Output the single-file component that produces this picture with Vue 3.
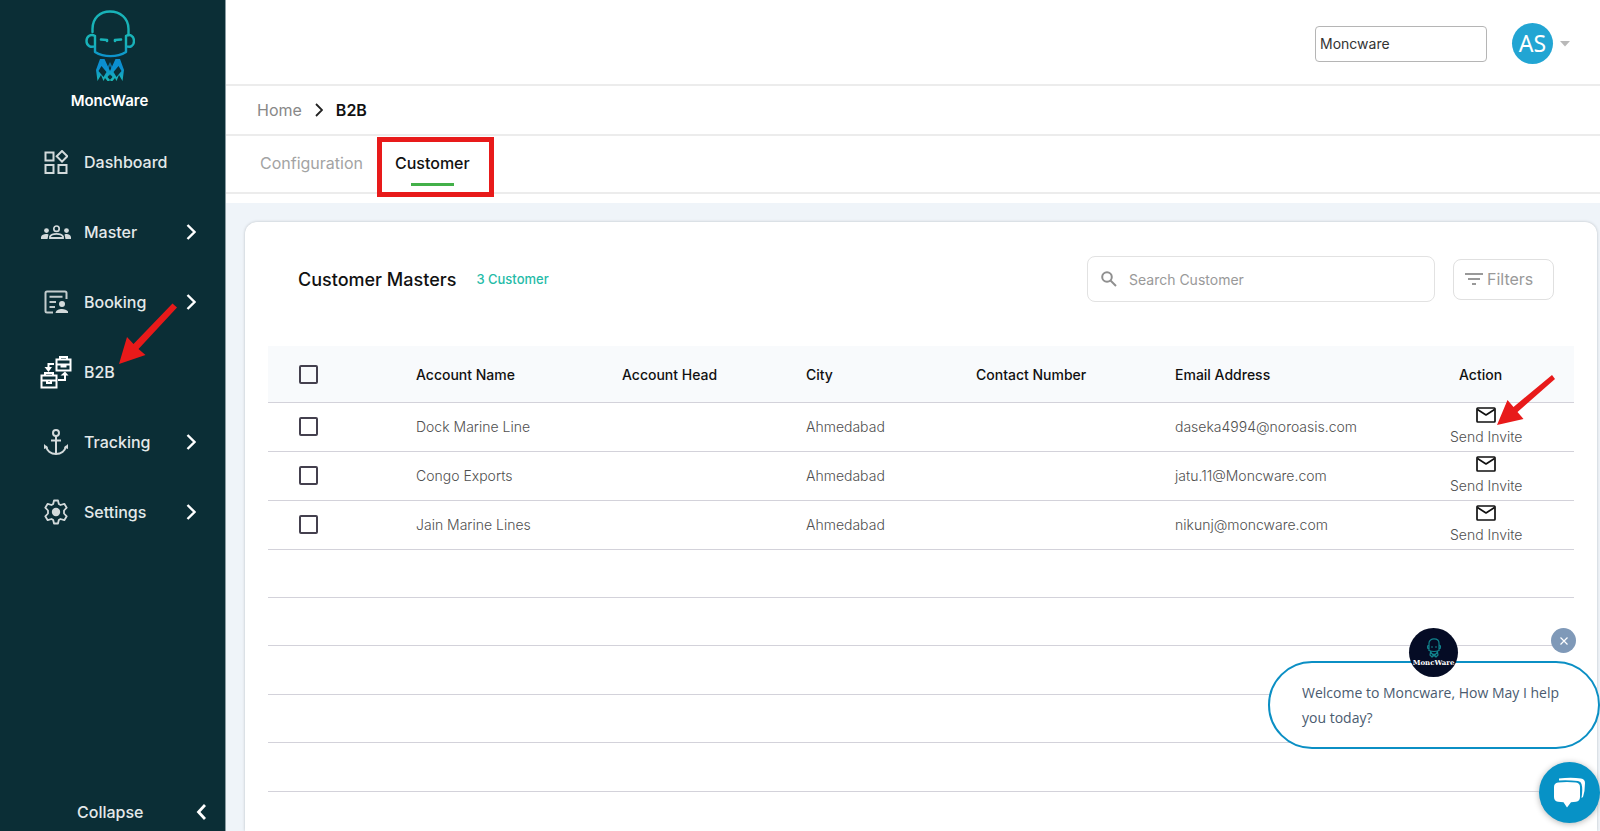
<script setup>
import { ref } from 'vue'

const menu = [
  { label: 'Dashboard', icon: 'dashboard', more: false },
  { label: 'Master', icon: 'people', more: true },
  { label: 'Booking', icon: 'booking', more: true },
  { label: 'B2B', icon: 'b2b', more: false },
  { label: 'Tracking', icon: 'anchor', more: true },
  { label: 'Settings', icon: 'gear', more: true },
]

const customers = [
  { name: 'Dock Marine Line', head: '', city: 'Ahmedabad', phone: '', email: 'daseka4994@noroasis.com' },
  { name: 'Congo Exports', head: '', city: 'Ahmedabad', phone: '', email: 'jatu.11@Moncware.com' },
  { name: 'Jain Marine Lines', head: '', city: 'Ahmedabad', phone: '', email: 'nikunj@moncware.com' },
]

const company = ref('Moncware')
const search = ref('')
</script>

<template>
  <div class="app">
    <aside class="sidebar">
      <div class="brand">
        <svg width="50" height="72" viewBox="0 0 50 72" fill="none" aria-hidden="true">
          <defs>
            <linearGradient id="face" x1="0" y1="0" x2="0" y2="48" gradientUnits="userSpaceOnUse">
              <stop offset="0.7" stop-color="#18b3b8" />
              <stop offset="1" stop-color="#0b8fd0" />
            </linearGradient>
            <linearGradient id="collar" x1="0" y1="49" x2="0" y2="71" gradientUnits="userSpaceOnUse">
              <stop offset="0.4" stop-color="#0b8fd0" />
              <stop offset="1" stop-color="#1bb9b4" />
            </linearGradient>
          </defs>
          <g stroke="url(#face)" stroke-width="2.4" stroke-linecap="round" stroke-linejoin="round">
            <path d="M7.500 22V19C7.500 8 15 1.500 25 1.500S43.500 8 43.500 19V25" />
            <path d="M10 26C6 23.500 1.500 26 1.500 31S6 38 10 36M10 26V42C19 47.500 32 47.500 41 42V26M41 26C45 23.500 49 26 49 31S45 38 41 36" />
            <path d="M16 29.500L22 30V31M36 29.500L30 30V31" stroke-width="2.600" />
          </g>
          <path fill="url(#collar)" fill-rule="evenodd" d="M15 49H19.500L25 61L30.500 49H35L39 60L37.500 71L34 65L31.500 71L30 68L27.500 71H25.500L25 69L24.500 71H22.500L20 68L18.500 71L16 65L12.500 71L11 60ZM16.500 56L13.500 61L18.500 67L21.500 62ZM33.500 56L28.500 62L31.500 67L36.500 61ZM25 64L22.500 67L25 70L27.500 67Z" />
          <path fill="url(#collar)" d="M25 52L28.500 59L25 66L21.500 59ZM25 55.500L23.500 59L25 62.500L26.500 59Z" fill-rule="evenodd" opacity="0.7" />
        </svg>
        <span class="brand-name">MoncWare</span>
      </div>

      <nav class="menu" aria-label="Main">
        <a v-for="item in menu" :key="item.label" class="menu-item" href="#">
          <span class="menu-icon">
            <svg v-if="item.icon === 'dashboard'" width="24" height="24" viewBox="0 0 24 24" fill="none" stroke="#d3dadb" stroke-width="2">
              <path d="M1.500 2.500h8v8h-8zM1.500 15h8v8h-8zM14.500 15h8v8h-8zM18 1l5.300 5.300L18 11.600l-5.300-5.300z" />
            </svg>
            <svg v-else-if="item.icon === 'people'" width="30" height="15" viewBox="0 0 30 15" fill="none">
              <circle cx="15.500" cy="3.700" r="2.700" stroke="#d3dadb" stroke-width="1.700" />
              <path d="M9 13V11.500C11 8 20 8 22 11.500V13Z" stroke="#d3dadb" stroke-width="1.800" />
              <circle cx="5.500" cy="5.600" r="2.400" fill="#d3dadb" />
              <circle cx="25.500" cy="5.600" r="2.400" fill="#d3dadb" />
              <path d="M0 14V12C1 9 5 8.500 7.500 9.500L6.500 14ZM30 14V12C29 9 26 8.500 23.500 9.500L24.500 14Z" fill="#d3dadb" />
            </svg>
            <svg v-else-if="item.icon === 'booking'" width="24" height="24" viewBox="0 0 24 24" fill="none" stroke="#c3cccd" stroke-width="2">
              <path d="M9 22.500H3Q1.500 22.500 1.500 21V3Q1.500 1.500 3 1.500H21Q22.500 1.500 22.500 3V9M5.500 6.700H18.500M5.500 12H12M5.500 17H11" />
              <circle cx="18" cy="14" r="3" fill="#d3dadb" stroke="none" />
              <path d="M11.500 23C12 17.500 24 17.500 24.500 23Z" fill="#d3dadb" stroke="none" />
            </svg>
            <svg v-else-if="item.icon === 'b2b'" width="32" height="34" viewBox="0 0 32 34" fill="none" stroke="#fff" stroke-width="2">
              <path d="M16.500 4.500h14v11h-14zM16.500 9.500h14M20 4V2h7v2M21.500 9v2.500h4v-2.500M1.500 20.500h15v12h-15zM1.500 25.500h15M5 20v-2h8v2M7 25v3h4v-3M14 9H8.500V14M18 25H25V20" />
              <path d="M4.500 12L8.500 17L12 12ZM20.500 20.500L25 16.500L28.500 20.500Z" fill="#fff" stroke="none" />
            </svg>
            <svg v-else-if="item.icon === 'anchor'" width="24" height="27" viewBox="0 0 24 27" fill="none" stroke="#d3dadb" stroke-width="2">
              <circle cx="12" cy="4" r="3" />
              <path d="M12 7V25M7 11.500H17M2 17C3 22 7 25 12 25S21 22 22 17" />
              <path d="M0 20V15L4 18.500ZM24 20V15L20 18.500Z" fill="#d3dadb" stroke="none" />
            </svg>
            <svg v-else width="24" height="26" viewBox="0 0 24 26" fill="none" stroke="#d3dadb" stroke-width="1.800" stroke-linejoin="round">
              <path d="M10 1.500H14L14.800 5L16.500 6L20.300 4.800L22.700 8.700L20 11.500V14.500L22.700 17.300L20.300 21.200L16.500 20L14.800 21L14 24.500H10L9.200 21L7.500 20L3.700 21.200L1.300 17.300L4 14.500V11.500L1.300 8.700L3.700 4.800L7.500 6L9.200 5Z" />
              <circle cx="12" cy="13" r="4.200" fill="#d3dadb" stroke="none" />
            </svg>
          </span>
          <span class="menu-label">{{ item.label }}</span>
          <svg v-if="item.more" class="menu-more" width="10" height="16" viewBox="0 0 10 16" fill="none" stroke="#fff" stroke-width="2.400">
            <path d="M1.500 1L8.500 8L1.500 15" />
          </svg>
          <svg v-if="item.icon === 'b2b'" class="arrow-nav" width="60" height="62" viewBox="0 0 60 62" fill="#e81a1a" aria-hidden="true">
            <path d="M1 61L9 34L15.500 41L54.500 0.500L59 4.500L20.500 46L27.500 52Z" />
          </svg>
        </a>
      </nav>

      <button class="collapse" type="button">
        <span>Collapse</span>
        <svg width="10" height="16" viewBox="0 0 10 16" fill="none" stroke="#fff" stroke-width="2.800">
          <path d="M9 1L2.500 8L9 15" />
        </svg>
      </button>
    </aside>

    <main class="main">
      <header class="topbar">
        <input v-model="company" class="company" type="text" aria-label="Company" />
        <button class="account" type="button" aria-label="Account menu">
          <span class="avatar">AS</span>
          <svg width="10" height="6" viewBox="0 0 10 6" fill="#b9b9b9"><path d="M0 0H10L5 5.500Z" /></svg>
        </button>
      </header>

      <nav class="crumbs" aria-label="Breadcrumb">
        <a href="#">Home</a>
        <svg width="8" height="14" viewBox="0 0 8 14" fill="none" stroke="#222" stroke-width="1.800"><path d="M1 1L7 7L1 13" /></svg>
        <span class="current">B2B</span>
      </nav>

      <nav class="tabs" aria-label="Sections">
        <a class="tab" href="#">Configuration</a>
        <a class="tab active" href="#">Customer</a>
      </nav>

      <section class="content">
        <div class="card">
          <div class="card-head">
            <h1>Customer Masters</h1>
            <span class="count">3 Customer</span>
            <label class="search">
              <svg width="16" height="16" viewBox="0 0 16 16" fill="none" stroke="#8f8f8f" stroke-width="2">
                <circle cx="6" cy="6" r="4.800" /><path d="M9.500 9.500L15 15" />
              </svg>
              <input v-model="search" type="text" placeholder="Search Customer" aria-label="Search Customer" />
            </label>
            <button class="filters" type="button">
              <svg width="18" height="12" viewBox="0 0 18 12" fill="#999"><path d="M0 0H18V2H0ZM3 5H15V7H3ZM7 10H11V12H7Z" /></svg>
              Filters
            </button>
          </div>

          <table class="grid">
            <colgroup>
              <col class="c-check" /><col class="c-name" /><col class="c-head" /><col class="c-city" />
              <col class="c-phone" /><col /><col class="c-action" />
            </colgroup>
            <thead>
              <tr>
                <th class="check"><input type="checkbox" aria-label="Select all" /></th>
                <th>Account Name</th>
                <th>Account Head</th>
                <th>City</th>
                <th>Contact Number</th>
                <th>Email Address</th>
                <th class="action">Action</th>
              </tr>
            </thead>
            <tbody>
              <tr v-for="c in customers" :key="c.name">
                <td class="check"><input type="checkbox" :aria-label="'Select ' + c.name" /></td>
                <td>{{ c.name }}</td>
                <td>{{ c.head }}</td>
                <td>{{ c.city }}</td>
                <td>{{ c.phone }}</td>
                <td>{{ c.email }}</td>
                <td>
                  <button class="invite" type="button">
                    <svg width="20" height="16" viewBox="0 0 20 16" fill="none" stroke="#111" stroke-width="1.700" stroke-linejoin="round">
                      <rect x="1" y="1" width="18" height="14" rx="0.800" /><path d="M1.500 2.500L10 8L18.500 2.500" />
                    </svg>
                    <span>Send Invite</span>
                  </button>
                </td>
              </tr>
              <tr v-for="n in 5" :key="n" class="blank"><td colspan="7"></td></tr>
            </tbody>
          </table>
          <svg class="arrow-invite" width="60" height="52" viewBox="0 0 60 52" fill="#e81a1a" aria-hidden="true">
            <path d="M1 51L11.500 26L17.500 33L56 1L59 5L21.500 38L27.500 45Z" />
          </svg>
        </div>
      </section>
    </main>

    <div class="chat">
      <button class="chat-close" type="button" aria-label="Close message">
        <svg width="8" height="8" viewBox="0 0 8 8" fill="none" stroke="#fff" stroke-width="1.200"><path d="M0.500 0.500L7.500 7.500M7.500 0.500L0.500 7.500" /></svg>
      </button>
      <div class="bubble">
        <span class="chat-logo">
          <svg width="16" height="20" viewBox="0 0 16 20" fill="none" stroke="#11848d" stroke-width="1.200">
            <path d="M3 7V5C3 -0.500 13 -0.500 13 5V7M3 7C1 7 1 11 3 11V12.500Q8 14.500 13 12.500V11C15 11 15 7 13 7M3 7V11M13 7V11M5 9H7M9 9H11M4.500 14L8 18L11.500 14L12 17L10 19L8 16L6 19L4 17Z" />
          </svg>
          <span>MoncWare</span>
        </span>
        <p>Welcome to Moncware, How May I help you today?</p>
      </div>
      <button class="chat-open" type="button" aria-label="Open chat">
        <svg width="34" height="32" viewBox="0 0 34 32" fill="#fff">
          <path d="M6 1.500Q18 0 28 1.500Q32 2 32 6Q32 14 30 20L28.500 21Q30 12 28.500 7Q28 4.500 25 4Q15 3 6 3.500Z" />
          <path d="M5 5.500Q14 4.500 23 5.500Q27 6 27 10V20Q27 24 23 24.700L18 25.300L14 30.500L10.500 25.300L5 24.700Q1 24 1 20V10Q1 6 5 5.500Z" />
        </svg>
      </button>
    </div>
  </div>
</template>

<style>
html, body { margin: 0; }
</style>

<style scoped>
.app {
  display: flex;
  height: 100vh;
  overflow: hidden;
  position: relative;
  font-family: Inter, "Liberation Sans", sans-serif;
  font-size: 14px;
  color: #111;
  background: #fff;
}
.app * { box-sizing: border-box; }
a { color: inherit; text-decoration: none; }
button { font: inherit; border: 0; background: none; padding: 0; }

.sidebar {
  flex: none;
  width: 226px;
  display: flex;
  flex-direction: column;
  background: #0b2e36;
  border-right: 1px solid #8b9ca2;
  color: #e4e9ea;
}
.brand { display: flex; flex-direction: column; align-items: center; gap: 8px; padding: 10px 6px 0 0; }
.brand-name { font-size: 15px; line-height: 22px; font-weight: 600; color: #fff; }
.menu { display: flex; flex-direction: column; margin-top: 15px; }
.menu-item { position: relative; display: flex; align-items: center; height: 70px; padding: 0 29px 0 40px; font-size: 16px; font-weight: 500; }
.menu-icon { width: 32px; display: flex; justify-content: center; }
.menu-label { flex: 1; margin-left: 12px; }
.arrow-nav { position: absolute; left: 118px; top: -34px; }
.collapse { margin-top: auto; height: 38px; padding: 0 19px 0 77px; display: flex; align-items: center; justify-content: space-between; color: #e4e9ea; font-size: 16px; font-weight: 500; }

.main { flex: 1; min-width: 0; display: flex; flex-direction: column; }
.topbar { flex: none; height: 86px; display: flex; justify-content: flex-end; align-items: center; gap: 25px; padding: 3px 30px 0 0; border-bottom: 2px solid #ececec; }
.company { width: 172px; height: 36px; border: 1px solid #b5b5b5; border-radius: 4px; padding: 0 4px; font: inherit; color: #333; }
.account { display: flex; align-items: center; gap: 7px; }
.avatar { width: 41px; height: 41px; border-radius: 50%; background: #22a5d3; color: #fff; font-family: "Noto Sans", sans-serif; font-size: 23px; line-height: 41px; text-align: center; }
.crumbs { flex: none; height: 50px; display: flex; align-items: center; gap: 13px; padding-left: 31px; border-bottom: 2px solid #ececec; font-size: 16px; color: #888; }
.current { color: #111; font-weight: 600; }
.tabs { flex: none; height: 58px; display: flex; align-items: center; gap: 32px; padding: 0 0 2px 34px; border-bottom: 2px solid #ececec; font-size: 16px; color: #a3a3a3; }
.tab { position: relative; line-height: 20px; }
.active { color: #111; font-weight: 500; }
.active::before { content: ""; position: absolute; left: 16px; right: 16px; top: 30px; height: 3px; background: #43b049; }
.active::after { content: ""; position: absolute; inset: -16px -24px -24px -18px; border: 5px solid #e81a1a; }

.content { flex: 1; min-height: 0; margin-top: 9px; padding: 19px 3px 0 19px; background: #eff4f9; }
.card { position: relative; height: 100%; background: #fff; border-radius: 12px 12px 0 0; box-shadow: 0 0 3px #b9bec4; padding: 34px 23px 0; }
.card-head { display: flex; align-items: center; height: 46px; padding: 0 20px 0 30px; }
h1 { margin: 0; font-size: 18px; font-weight: 500; }
.count { margin-left: 20px; font-size: 13px; font-weight: 500; color: #25bba7; }
.search { margin-left: auto; width: 348px; height: 46px; display: flex; align-items: center; gap: 12px; padding: 0 13px; border: 1px solid #e2e2e2; border-radius: 8px; }
.search input { flex: 1; min-width: 0; border: 0; outline: 0; padding: 0; font: inherit; background: none; }
.search input::placeholder { color: #999; opacity: 1; }
.filters { width: 101px; height: 41px; margin-left: 18px; padding-left: 11px; display: flex; align-items: center; gap: 4px; border: 1px solid #e0e0e0; border-radius: 8px; color: #999; font-size: 16px; }

.grid { width: 100%; margin-top: 44px; border-collapse: separate; border-spacing: 0; table-layout: fixed; }
.c-check { width: 148px; }
.c-name { width: 206px; }
.c-head { width: 184px; }
.c-city { width: 170px; }
.c-phone { width: 199px; }
.c-action { width: 124px; }
th, td { padding: 0; text-align: left; border-bottom: 1px solid #d3d2da; }
th { height: 57px; background: #f8fafc; font-weight: 500; }
td { height: 49px; padding-bottom: 2px; color: #505050; font-weight: 300; }
.blank:nth-child(odd) td, .blank:nth-child(4) td { height: 48px; }
.check { padding-left: 31px; }
.check input { appearance: none; display: block; width: 19px; height: 19px; margin: 0; border: 2px solid #44404e; border-radius: 2px; }
.action { padding-left: 9px; }
.invite { display: flex; flex-direction: column; align-items: center; gap: 5px; color: inherit; line-height: 18px; }
.arrow-invite { position: absolute; right: 41px; top: 152px; }

.chat { position: absolute; right: 0; bottom: 8px; display: flex; flex-direction: column; align-items: flex-end; }
.chat-close { display: flex; align-items: center; justify-content: center; width: 25px; height: 25px; margin: 0 24px 8px 0; border-radius: 50%; background: #7f99b8; }
.bubble { position: relative; width: 332px; padding: 17px 32px 17px; border: 2px solid #0b8fc4; border-radius: 44px; background: #fff; font-family: "Open Sans", sans-serif; font-size: 14px; line-height: 25px; color: #4a5b6f; }
.bubble p { margin: 0; }
.chat-logo { position: absolute; left: 139px; top: -35px; width: 49px; height: 49px; border-radius: 50%; background: #050c25; display: flex; flex-direction: column; align-items: center; padding-top: 10px; }
.chat-logo span { font-family: "DejaVu Serif", serif; font-size: 7px; line-height: 10px; font-weight: 700; color: #fff; }
.chat-open { display: flex; align-items: center; justify-content: center; width: 61px; height: 61px; margin-top: 13px; border-radius: 50%; background: #0792c6; box-shadow: 0 1px 6px #b5b5b5; }
</style>
